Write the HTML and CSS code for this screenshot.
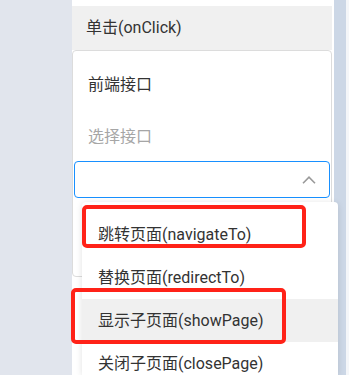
FILE: index.html
```html
<!DOCTYPE html>
<html lang="zh">
<head>
<meta charset="utf-8">
<link rel="stylesheet" href="styles.css">
</head>
<body>
<div class="screen">
  <div class="left-bg"></div>
  <div class="panel">
    <div class="top-strip"></div>
    <div class="event-head">单击(onClick)</div>
    <div class="card">
      <div class="field-label">前端接口</div>
      <div class="field-hint">选择接口</div>
      <div class="select">
        <svg class="chevron" width="14" height="8" viewBox="0 0 14 8"><path d="M1 7.2 L7 1.2 L13 7.2" fill="none" stroke="#9a9a9a" stroke-width="1.6"/></svg>
      </div>
    </div>
  </div>
  <div class="side-strip"></div>
  <div class="edge"></div>

  <div class="dropdown">
    <div class="item">跳转页面(navigateTo)</div>
    <div class="item">替换页面(redirectTo)</div>
    <div class="item active">显示子页面(showPage)</div>
    <div class="item">关闭子页面(closePage)</div>
  </div>
  <div class="mark mark-1"></div>
  <div class="mark mark-2"></div>
</div>
</body>
</html>
```

FILE: styles.css
```css
html, body {
  margin: 0;
  padding: 0;
  width: 349px;
  height: 375px;
  overflow: hidden;
  background: #e1e5ed;
  font-family: Roboto, "Noto Sans CJK SC", sans-serif;
  font-size: 16px;
  color: #333;
}
.screen {
  position: relative;
  display: flex;
  width: 349px;
  height: 375px;
  overflow: hidden;
}
.left-bg {
  width: 72px;
  flex: none;
}
.panel {
  width: 262px;
  flex: none;
  background: #fff;
  padding-right: 2px;
  box-sizing: border-box;
}
.top-strip {
  height: 6px;
}
.event-head {
  height: 44px;
  background: #f0f0f0;
  padding-left: 14px;
  line-height: 44px;
  white-space: nowrap;
}
.card {
  border: 1px solid #dcdcdc;
  border-radius: 4px;
  padding: 0 1px;
  height: 227px;
  box-sizing: border-box;
}
.field-label {
  padding: 21px 0 0 14px;
  height: 36px;
  line-height: 26px;
}
.field-hint {
  padding: 16px 0 0 14px;
  height: 24px;
  line-height: 26px;
  color: #a6a6a6;
}
.select {
  margin-top: 13px;
  height: 37px;
  border: 1px solid #1890ff;
  border-radius: 4px;
  box-sizing: border-box;
  display: flex;
  align-items: center;
  justify-content: flex-end;
  padding-right: 13px;
}
.chevron {
  display: block;
}
.side-strip {
  width: 12px;
  flex: none;
  background: #ccd7e6;
}
.edge {
  flex: 1;
  background: #f4f6f9;
}
.dropdown {
  position: absolute;
  left: 82px;
  top: 202px;
  width: 256px;
  height: 173px;
  background: #fff;
  border-radius: 4px 4px 0 0;
  box-shadow: 0 1px 6px rgba(0, 0, 0, 0.12);
  padding-top: 11px;
  box-sizing: border-box;
  overflow: hidden;
}
.item {
  height: 43px;
  line-height: 43px;
  padding-left: 16px;
  white-space: nowrap;
}
.item.active {
  background: #f0f0f0;
}
.mark {
  position: absolute;
  border: 4px solid #ff2218;
  border-radius: 5px;
  box-sizing: border-box;
}
.mark-1 {
  left: 82px;
  top: 205px;
  width: 224px;
  height: 43px;
}
.mark-2 {
  left: 71px;
  top: 288px;
  width: 215px;
  height: 56px;
}
```
